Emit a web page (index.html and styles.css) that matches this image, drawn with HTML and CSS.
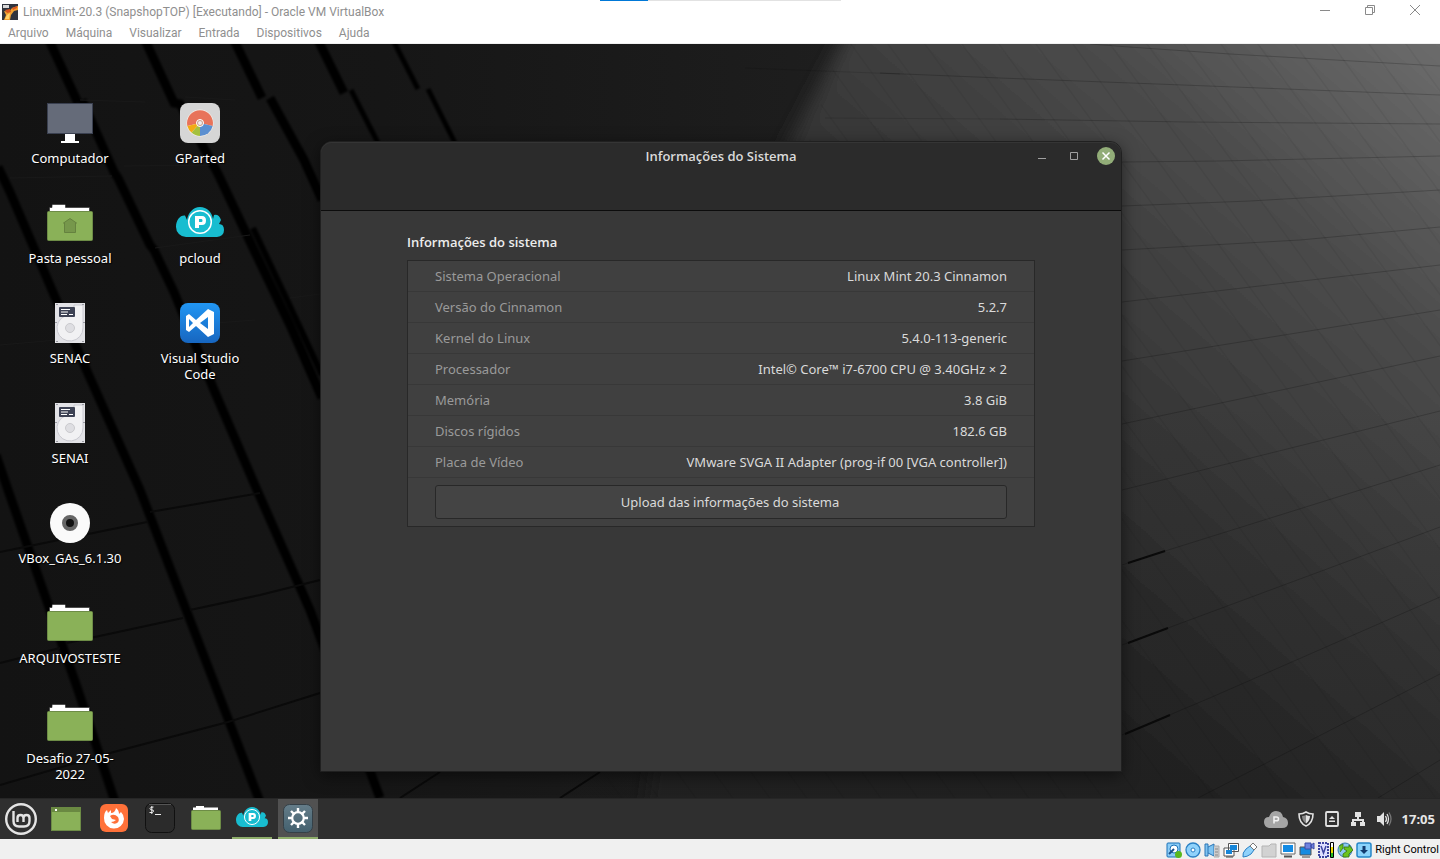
FILE: index.html
```html
<!DOCTYPE html>
<html lang="pt-BR">
<head>
<meta charset="utf-8">
<title>LinuxMint-20.3 (SnapshopTOP) [Executando] - Oracle VM VirtualBox</title>
<link rel="stylesheet" href="styles.css">
</head>
<body>
<svg class="defs" aria-hidden="true">
  <symbol id="folder" viewBox="0 3 48 48">
    <path d="M3.500 17V11.500H6V9.500Q6 8.500 7 8.500H18.500Q19.500 8.500 19.500 9.500V11.500H43.500V17Z" fill="#fff" stroke="#252525" stroke-opacity=".6"/>
    <rect x="1.500" y="15.500" width="45" height="29" rx="1" fill="#8ab158" stroke="#6d8c46"/>
  </symbol>
  <symbol id="drive" viewBox="0 0 48 48">
    <rect x="9" y="4" width="30" height="40" fill="#e2e2e6"/>
    <path d="M28 6H37V29A13 13 0 1 1 19 17L28 15Z" fill="#f1f1f3" stroke="#c9c9d0" stroke-width="1"/>
    <circle cx="24" cy="29" r="4.500" fill="#dedee2" stroke="#cacace"/>
    <rect x="13" y="8" width="16" height="10" rx="1" fill="#3d4254"/>
    <path d="M15 10.500h9M15 13h7M15 15.500h6m2 0h4" stroke="#fff" stroke-width="1"/>
    <path d="M10 5h2v1h-2zM36 5h2v1h-2zM10 42h2v1h-2zM36 42h2v1h-2zM9 23h2v1H9zM37 23h2v1h-2z" fill="#999aa2"/>
  </symbol>
  <symbol id="cloud" viewBox="0 0 48 32">
    <path d="M10 31A10 10 0 0 1 0 21C0 14 4 9 9 9.500L11 14C12 7 17 1 24 1S36 6 37 13L38 9Q43 8 45 14L43 18Q48 18 48 24T41 31Z" fill="#18bdd0"/>
    <circle cx="24" cy="16" r="11.300" fill="#18bdd0" stroke="#fff" stroke-width="1.500"/>
    <path d="M19 10H26Q30 10 30 14.500T26 19H23V22H19ZM23 13V16H25.500Q26.500 16 26.500 14.500T25.500 13Z" fill="#fff" fill-rule="evenodd"/>
  </symbol>
</svg>

<header class="host-title">
  <svg class="i16" viewBox="0 0 16 16"><rect width="16" height="16" fill="#30343e"/><path d="M1 1h6v3H1z" fill="#d8d8d8"/><path d="M2 7l5 1 3-4 6-2v4l-4 1-3 4-1 5H2l2-5Z" fill="#f0a030"/><path d="M3 6l5-1 1 3-4 1ZM10 4l5-2v2l-4 2Z" fill="#d9551f"/><path d="M5 11l3-2-1 6H3Z" fill="#ffd36b"/></svg>
  <h1>LinuxMint-20.3 (SnapshopTOP) [Executando] - Oracle VM VirtualBox</h1>
  <div class="host-tab"></div>
  <div class="host-controls">
    <button aria-label="Minimizar"><svg viewBox="0 0 12 12"><path d="M1 6.500h10"/></svg></button>
    <button aria-label="Restaurar"><svg viewBox="0 0 12 12"><path d="M1.500 3.500h7v7h-7zM3.500 3V1.500h7v7H9"/></svg></button>
    <button aria-label="Fechar"><svg viewBox="0 0 12 12"><path d="M1 1l10 10M11 1L1 11"/></svg></button>
  </div>
</header>
<nav class="host-menu">
  <button>Arquivo</button><button>Máquina</button><button>Visualizar</button><button>Entrada</button><button>Dispositivos</button><button>Ajuda</button>
</nav>

<main class="desktop">
  <svg class="wallpaper" viewBox="0 44 1440 754" preserveAspectRatio="xMidYMid slice" aria-hidden="true">
    <defs>
      <linearGradient id="base" x1="0" x2="850" y1="0" y2="0" gradientUnits="userSpaceOnUse"><stop offset="0" stop-color="#131313"/><stop offset=".45" stop-color="#161616"/><stop offset="1" stop-color="#1e1e1e"/></linearGradient>
      <linearGradient id="lit" x1="930" y1="620" x2="1440" y2="44" gradientUnits="userSpaceOnUse"><stop offset="0" stop-color="#202020"/><stop offset=".35" stop-color="#343434"/><stop offset=".7" stop-color="#4b4b4b"/><stop offset="1" stop-color="#6c6c6c"/></linearGradient>
      <linearGradient id="low" x1="0" y1="400" x2="0" y2="798" gradientUnits="userSpaceOnUse"><stop offset="0" stop-color="#1c1c1c" stop-opacity="0"/><stop offset="1" stop-color="#1c1c1c" stop-opacity=".3"/></linearGradient>
      <pattern id="slats" width="37" height="900" patternUnits="userSpaceOnUse" patternTransform="skewX(36)"><path d="M5 0V900" stroke="#000" stroke-opacity=".1"/></pattern>
      <clipPath id="right"><path d="M840 44H1440V798H600Z"/></clipPath>
      <filter id="soft" x="-10%" y="-10%" width="120%" height="120%"><feGaussianBlur stdDeviation="9"/></filter>
      <filter id="edge" x="-10%" y="-10%" width="120%" height="120%"><feGaussianBlur stdDeviation="1"/></filter>
    </defs>
    <rect y="44" width="1440" height="754" fill="url(#base)"/>
    <path d="M865 0H1500V850H640Q720 260 795 130Z" fill="url(#lit)" filter="url(#soft)"/>
    <rect x="560" y="400" width="880" height="398" fill="url(#low)"/>
    <rect x="600" y="44" width="840" height="754" fill="url(#slats)" clip-path="url(#right)"/>
    <g fill="none" stroke="#000" stroke-opacity=".2">
      <path d="M745 68L900 74M825 118L1000 119" stroke-opacity=".12"/>
      <path d="M1090 44L1129 47L1230 54L1440 66M880 73L1000 78L1157 84L1440 95M1000 119L1188 122L1440 124M1122 162L1220 161L1440 156M1122 206L1250 201L1440 190M1122 250L1300 240L1440 227M1122 302L1440 265M1122 361L1440 310M1122 424L1235 400L1440 356M1122 490L1440 411M1122 565L1165 551L1440 465M1122 645L1168 628L1440 527M1122 735L1212 697L1440 597M1198 798L1440 674M1378 798L1440 760"/>
    </g>
    <path d="M1128 563L1165 551M1128 643L1168 628M1125 734L1170 715" stroke="#0a0a0a" stroke-width="2"/>
    <g fill="none" stroke="#040404" stroke-width="9" filter="url(#edge)">
      <path d="M49 40L78 103M82 100L114 172L118 178L150 245L154 250L174 292L214 390L257 490L310 610L380 798"/>
      <path d="M145 40L174 103L180 104L216 170L219 176L254 250L290 325L322 398M234 40L262 98M270 98L304 160L322 200M318 40L344 93"/>
      <path d="M-2 167L10 192L52 290L82 360L140 490L217 690L260 802M-4 455L8 490L78 690L115 802"/>
      <path d="M253 228L288 302L322 375" stroke-width="6"/>
      <path d="M393 40L418 89M351 90L379 145M428 89L456 145" stroke-width="5"/>
    </g>
    <path d="M0 552L147 522M150 512L260 493M67 643L183 618M0 663L60 648M0 785L110 753L228 722L320 693M190 610L260 595L320 580M400 798L440 772M560 798L600 772" fill="none" stroke="#0a0a0a" stroke-width="2"/>
    <path d="M80 100L145 102M185 97L235 100M10 178L112 176M124 166L210 165M155 248L250 235M0 345L80 338M190 325L255 320M290 298L320 294" fill="none" stroke="#191919"/>
  </svg>

  <div class="icons">
    <button class="icon"><svg viewBox="0 0 48 48"><rect x="1.500" y="4.500" width="45" height="30" fill="#656b79" stroke="#3a4050"/><path d="M19 35H29V42H33V44H15V42H19Z" fill="#fff"/></svg><span>Computador</span></button>
    <button class="icon"><svg viewBox="0 0 48 48"><use href="#folder"/><path d="M17.500 24L24 19.500L30.500 24H29.500V33.500H18.500V24Z" fill="#76974b" stroke="#65823f"/></svg><span>Pasta pessoal</span></button>
    <button class="icon"><svg><use href="#drive"/></svg><span>SENAC</span></button>
    <button class="icon"><svg><use href="#drive"/></svg><span>SENAI</span></button>
    <button class="icon"><svg viewBox="0 0 48 48"><circle cx="24" cy="24" r="20" fill="#fafafa"/><circle cx="24" cy="24" r="6" fill="#111" stroke="#666" stroke-width="4"/></svg><span>VBox_GAs_6.1.30</span></button>
    <button class="icon"><svg><use href="#folder"/></svg><span>ARQUIVOSTESTE</span></button>
    <button class="icon"><svg><use href="#folder"/></svg><span>Desafio 27-05-2022</span></button>
    <button class="icon"><svg viewBox="0 0 48 48"><rect x="4" y="4" width="40" height="40" rx="8" fill="#d6d6d6"/><circle cx="24" cy="24" r="13.500" fill="#f6efe9"/><path d="M24 24L11.300 27A13 13 0 1 1 36.700 27Z" fill="#e8735a"/><path d="M24 24L36.700 27A13 13 0 0 1 24 37Z" fill="#5b8fd0"/><path d="M24 24V37A13 13 0 0 1 15.500 33.500Z" fill="#a5c03d"/><path d="M24 24L15.500 33.500A13 13 0 0 1 11.300 27Z" fill="#f2ab14"/><circle cx="24" cy="24" r="3.500" fill="#ddd" stroke="#fff" stroke-width="1"/><circle cx="24" cy="24" r="2.500" fill="#eee" stroke="#c98" stroke-width="1"/></svg><span>GParted</span></button>
    <button class="icon"><svg viewBox="0 -7 48 48"><use href="#cloud" width="48" height="32"/></svg><span>pcloud</span></button>
    <button class="icon"><svg viewBox="0 0 48 48"><defs><linearGradient id="vs" x2="0" y2="1"><stop stop-color="#2196f3"/><stop offset="1" stop-color="#1766c0"/></linearGradient></defs><rect x="4" y="4" width="40" height="40" rx="8" fill="url(#vs)"/><path d="M10 17L13 15L20 21L32 10L38 13V35L32 38L20 27L13 33L10 31ZM13 20V28L17 24ZM32 18L24 24L32 30Z" fill="#fff" fill-rule="evenodd"/></svg><span>Visual Studio Code</span></button>
  </div>

  <section class="window">
    <header class="window-head">
      <h2>Informações do Sistema</h2>
      <div class="window-controls">
        <button aria-label="Minimizar"><svg viewBox="0 0 18 18"><path d="M5 11.500h8"/></svg></button>
        <button aria-label="Maximizar"><svg viewBox="0 0 18 18"><path d="M5.500 5.500h7v7h-7z"/></svg></button>
        <button class="close" aria-label="Fechar"><svg viewBox="0 0 18 18"><path d="M5.500 5.500l7 7m0-7l-7 7"/></svg></button>
      </div>
    </header>
    <div class="window-body">
      <h3>Informações do sistema</h3>
      <div class="card">
        <table>
          <tr><th scope="row">Sistema Operacional</th><td>Linux Mint 20.3 Cinnamon</td></tr>
          <tr><th scope="row">Versão do Cinnamon</th><td>5.2.7</td></tr>
          <tr><th scope="row">Kernel do Linux</th><td>5.4.0-113-generic</td></tr>
          <tr><th scope="row">Processador</th><td>Intel© Core™ i7-6700 CPU @ 3.40GHz × 2</td></tr>
          <tr><th scope="row">Memória</th><td>3.8 GiB</td></tr>
          <tr><th scope="row">Discos rígidos</th><td>182.6 GB</td></tr>
          <tr><th scope="row">Placa de Vídeo</th><td>VMware SVGA II Adapter (prog-if 00 [VGA controller])</td></tr>
        </table>
        <button class="upload">Upload das informações do sistema</button>
      </div>
    </div>
  </section>
</main>

<footer class="panel">
  <div class="launchers">
    <button aria-label="Menu"><svg viewBox="0 0 40 40"><circle cx="20" cy="20" r="14.800" fill="none" stroke="#e4e4e4" stroke-width="2.400"/><path d="M12.500 12V22Q12.500 27.500 18 27.500H23Q28.500 27.500 28.500 22V19Q28.500 16 25.500 16T22.500 19V23M22.500 19Q22.500 16 19.500 16T16.500 19V23" fill="none" stroke="#e4e4e4" stroke-width="2.400"/></svg></button>
    <button class="show-desktop" aria-label="Mostrar área de trabalho"><svg viewBox="0 0 40 40"><rect x="5.500" y="8.500" width="29" height="23" fill="#8ab158" stroke="#6d8c46"/><path d="M5 8H35V13H5Z" fill="#6a8942"/><path d="M9 10h2v2H9z" fill="#fff"/></svg></button>
    <button aria-label="Firefox"><svg viewBox="0 0 40 40"><rect x="6" y="5" width="28" height="28" rx="6" fill="#ff7139"/><path d="M10 19Q10 13 13 11L14 14L17 11V14Q21 14 22 9Q25 11 25 15L27 13Q30 16 30 20A10 10 0 0 1 10 19Z" fill="#fff"/><path d="M16 17Q20 14 24 18Q26 22 23 24T17 23Q20 23 22 21L18 20Z" fill="#ff7139"/></svg></button>
    <button aria-label="Terminal"><svg viewBox="0 0 40 40"><rect x="5.500" y="4.500" width="29" height="29" rx="6" fill="#2b2b2b" stroke="#101010"/><path d="M9 5.500H31" stroke="#555"/><path d="M13.500 8Q10 8 10 9.500T12 11T13.500 12.500T9.500 13.500M11.800 7V15M15 15.500h6" fill="none" stroke="#eee"/></svg></button>
    <button aria-label="Arquivos"><svg viewBox="0 0 40 40"><path d="M7 12V8.500H10V7H18V8.500H32V12Z" fill="#fff"/><rect x="5.500" y="11.500" width="29" height="19" rx="1" fill="#8ab158" stroke="#6d8c46"/></svg></button>
    <button class="running" aria-label="pcloud"><svg viewBox="0 0 40 40"><use href="#cloud" x="4" y="7" width="32" height="22"/></svg></button>
    <button class="running active" aria-label="Configurações"><svg viewBox="0 0 40 40"><defs><linearGradient id="gear" x2="0" y2="1"><stop stop-color="#657d89"/><stop offset="1" stop-color="#43606e"/></linearGradient></defs><rect x="5.500" y="5.500" width="29" height="28" rx="6" fill="url(#gear)" stroke="#354047"/><circle cx="20" cy="19" r="5.800" fill="none" stroke="#fff" stroke-width="2.200"/><path d="M20 9v5M20 24v5M10 19h5M25 19h5M13 12l3.500 3.500M23.500 22.500L27 26M27 12l-3.500 3.500M16.500 22.500L13 26" stroke="#fff" stroke-width="2.400"/></svg></button>
  </div>
  <div class="tray">
    <button aria-label="pcloud"><svg class="i24" viewBox="0 0 24 18"><path d="M5 18Q0 17 0 12T5 7Q7 1 12 1Q18 1 19 7Q24 8 24 13T18 18Z" fill="#a5a5a5"/><path d="M10 13.500V7H12.500Q14.500 7 14.500 8.900T12.500 10.800H10" fill="none" stroke="#f2f2f2" stroke-width="1.500"/></svg></button>
    <button aria-label="Atualizações"><svg class="i16" viewBox="0 0 16 16"><path d="M8 1Q11 3 15 3Q15 12 8 15Q1 12 1 3Q5 3 8 1Z" fill="none" stroke="#e2e2e2" stroke-width="1.600"/><path d="M8 4Q10 5 12 5Q12 10 8 12.500Z" fill="#e2e2e2"/><path d="M8 4Q6 5 4 5Q4 10 8 12.500Z" fill="#888"/></svg></button>
    <button aria-label="Discos"><svg class="i16" viewBox="0 0 16 16"><rect x="2" y="1" width="12" height="14" rx="1" fill="none" stroke="#e2e2e2" stroke-width="1.800"/><path d="M5 8L8 5l3 3ZM5 9.500h6V11H5z" fill="#e2e2e2"/></svg></button>
    <button aria-label="Rede"><svg class="i16" viewBox="0 0 16 16"><path d="M5 1h6v5H9v2h5v3h1v4h-5v-4h2v-1H4v1h2v4H1v-4h1V8h5V6H5z" fill="#e2e2e2"/></svg></button>
    <button aria-label="Som"><svg class="i16" viewBox="0 0 16 16"><path d="M1 5h3l4-4v14l-4-4H1z" fill="#e2e2e2"/><path d="M9.500 5Q11.500 8 9.500 11M11 3Q14 8 11 13" fill="none" stroke="#e2e2e2" stroke-width="1.300"/><path d="M13 1.500Q17 8 13 14.500" fill="none" stroke="#777" stroke-width="1.300"/></svg></button>
    <time>17:05</time>
  </div>
</footer>

<footer class="host-status">
  <svg class="i16" viewBox="0 0 16 16"><rect x="1" y="1" width="13" height="14" rx="1" fill="#8ccdf7" stroke="#1a72b8"/><circle cx="8" cy="7" r="4" fill="#fff" stroke="#1a72b8"/><path d="M8 7L3 12" stroke="#1a4f88" stroke-width="2"/><circle cx="12.500" cy="12.500" r="3.500" fill="#58b81e"/></svg>
  <svg class="i16" viewBox="0 0 16 16"><circle cx="8" cy="8" r="7" fill="#8fd2fb" stroke="#2a80c4" stroke-width="1.300"/><circle cx="8" cy="8" r="2" fill="#fff" stroke="#2a80c4"/></svg>
  <svg class="i16" viewBox="0 0 16 16"><path d="M1 2h3v12H1zM4 5l6-3v12l-6-3" fill="#7fc4f2" stroke="#2a74b4"/><path d="M10 4h5v11h-5" fill="#ccc" stroke="#aaa"/><path d="M11 7h3m-3 3h3m-3 3h3" stroke="#888"/></svg>
  <svg class="i16" viewBox="0 0 16 16"><path d="M5.500 1.500h10v8h-10zM1 6h10v8H1z" fill="#fff" stroke="#555"/><path d="M7 3h7v5H7zM3 8h6v4H3z" fill="#1585d8"/><path d="M3 15h7" stroke="#444"/></svg>
  <svg class="i16" viewBox="0 0 16 16"><path d="M1 15Q0 11 4 7L8 4l4 4-3 4Q5 15 1 15Z" fill="#8fd2fb" stroke="#2a80c4"/><path d="M8 4l3-3 4 4-3 3Z" fill="#fff" stroke="#777"/></svg>
  <svg class="i16" viewBox="0 0 16 16"><path d="M1 4h7l2-2h5v13H1z" fill="#d2d2d2" stroke="#b4b4b4"/></svg>
  <svg class="i16" viewBox="0 0 16 16"><path d="M1 1h14v11H1z" fill="#fff" stroke="#666"/><path d="M3 3h10v7H3z" fill="#138be4"/><path d="M4 14.500h8" stroke="#555" stroke-width="2"/></svg>
  <svg class="i16" viewBox="0 0 16 16"><path d="M1 5h11v8H1z" fill="#168be0" stroke="#555"/><path d="M3 15h8" stroke="#444"/><path d="M6 1h6v6H6zM12 3l3-2v6l-3-2z" fill="#6f83df" stroke="#3c4aa4"/></svg>
  <svg class="i16" viewBox="0 0 16 16"><rect x="1" y="1" width="9" height="14" fill="#dde0ff" stroke="#3c45a0" stroke-width="2" stroke-dasharray="2 1"/><path d="M3 4l2.500 7L8 4" fill="none" stroke="#3c45a0" stroke-width="1.500"/><path d="M12.500.500h3v15h-3z" fill="#fff" stroke="#000"/><path d="M13 5h2v10h-2z" fill="#f0e000"/><path d="M13 11h2v4h-2z" fill="#24b824"/></svg>
  <svg class="i16" viewBox="0 0 16 16"><circle cx="8" cy="8" r="7" fill="#8ac7f0" stroke="#3578ac"/><path d="M2 4l4-2v4L3 10M7 5h5v-2l4 5-4 4v3H6v-3l4-3-3-2Z" fill="#6bc31f" stroke="#34720f" stroke-width=".8"/></svg>
  <svg class="i16" viewBox="0 0 16 16"><rect x="1" y="1" width="14" height="14" rx="2" fill="#8bd3fb" stroke="#2687c8" stroke-width="1.500"/><path d="M6.500 4h3v4H12l-4 4-4-4h2.500Z" fill="#123c70"/></svg>
  <span>Right Control</span>
</footer>
</body>
</html>
```

FILE: styles.css
```css
* { box-sizing: border-box; }
body {
  margin: 0;
  min-height: 100vh;
  display: flex;
  flex-direction: column;
  background: #fff;
  font: 13px/16px "Noto Sans", "Open Sans", sans-serif;
}
h1, h2, h3 { margin: 0; font-size: inherit; }
h2, h3 { font-family: "Open Sans", sans-serif; font-weight: 600; }
button {
  margin: 0;
  padding: 0;
  border: 0;
  background: none;
  color: inherit;
  font: inherit;
}
svg { display: block; flex: none; }
.defs { position: absolute; width: 0; height: 0; }
.i16 { width: 16px; height: 16px; }
.i24 { width: 24px; height: 18px; }

.host-title {
  position: relative;
  display: flex;
  align-items: center;
  gap: 5px;
  height: 23px;
  padding-left: 2px;
  color: #8f8f8f;
  font: 12px/16px Roboto, sans-serif;
}
.host-title h1 { font-weight: 400; }
.host-tab {
  position: absolute;
  top: 0;
  left: 50%;
  width: 241px;
  height: 1px;
  margin-left: -120px;
  background: linear-gradient(to right, #0078d7 48px, #e2e2e2 48px);
}
.host-controls {
  display: flex;
  align-self: flex-start;
  margin-left: auto;
  padding-right: 3px;
}
.host-controls button {
  display: grid;
  place-items: center;
  width: 45px;
  height: 20px;
}
.host-controls svg {
  width: 12px;
  height: 12px;
  fill: none;
  stroke: #8a8a8a;
}
.host-menu {
  display: flex;
  gap: 17px;
  height: 21px;
  padding-left: 8px;
  border-bottom: 1px solid #f0f0f0;
  color: #8f8f8f;
  font: 12px/20px Roboto, sans-serif;
}

.desktop {
  position: relative;
  flex: 1;
  overflow: hidden;
  background: #151515;
}
.wallpaper {
  position: absolute;
  inset: 0;
  width: 100%;
  height: 100%;
}
.icons {
  position: relative;
  display: grid;
  grid-template-rows: repeat(6, 100px) auto;
  grid-auto-columns: 130px;
  grid-auto-flow: column;
  width: max-content;
  padding: 55px 0 0 5px;
}
.icon {
  display: flex;
  flex-direction: column;
  align-items: center;
  gap: 3px;
  padding: 0 15px;
  color: #fff;
  text-shadow: 1px 1px 1px #000;
}
.icon svg { width: 48px; height: 48px; }

.window {
  position: absolute;
  top: 97px;
  left: 320px;
  display: flex;
  flex-direction: column;
  width: 802px;
  min-height: 631px;
  border: 1px solid #202020;
  border-radius: 12px 12px 0 0;
  background: #383838;
  color: #dadada;
  box-shadow: 0 4px 16px rgba(0, 0, 0, .5);
}
.window-head {
  display: grid;
  grid-template-columns: 1fr auto 1fr;
  align-items: start;
  height: 69px;
  padding: 5px 6px;
  border-bottom: 1px solid #0c0c0c;
  border-radius: 11px 11px 0 0;
  background: #2b2b2b;
  box-shadow: inset 0 1px #353535;
}
.window-head h2 { grid-column: 2; line-height: 19px; }
.window-controls {
  display: flex;
  justify-content: flex-end;
  gap: 14px;
}
.window-controls button { width: 18px; height: 18px; border-radius: 50%; }
.window-controls svg {
  width: 18px;
  height: 18px;
  fill: none;
  stroke: #a0a0a0;
}
.window-controls .close { background: #92ad78; }
.window-controls .close svg { stroke: #fff; stroke-width: 1.5; }
.window-body { padding: 21px 86px; }
.window-body h3 {
  margin-bottom: 8px;
  color: #ececec;
  line-height: 20px;
}
.card {
  padding-bottom: 7px;
  border: 1px solid #282828;
  background: #404040;
}
table { width: 100%; border-spacing: 0; }
th, td {
  height: 31px;
  padding: 0 27px;
  border-bottom: 1px solid #383838;
  font-weight: 400;
  text-align: left;
}
th { color: #9a9a9a; }
td { text-align: right; }
.upload {
  display: block;
  width: calc(100% - 54px);
  height: 34px;
  margin: 7px 27px 0;
  padding-left: 18px;
  border: 1px solid #282828;
  border-radius: 3px;
  background: #444;
}

.panel {
  display: flex;
  justify-content: space-between;
  height: 41px;
  border-top: 1px solid #262626;
  background: #2f2f2f;
  color: #e6e6e6;
}
.launchers { display: flex; gap: 6px; padding-left: 1px; }
.launchers button { width: 40px; height: 40px; }
.launchers svg { width: 40px; height: 40px; }
.launchers .show-desktop { margin: 0 2px 0 -1px; }
.launchers .running { box-shadow: inset 0 -2px #8fae6b; }
.launchers .active { background: #515151; }
.tray {
  display: flex;
  align-items: center;
  gap: 10px;
  padding-right: 5px;
}
.tray time { font-weight: 700; }

.host-status {
  display: flex;
  align-items: center;
  justify-content: flex-end;
  gap: 3px;
  height: 20px;
  padding: 1px 1px 0 0;
  background: #f0f0f0;
  color: #000;
  font: 11px/16px Roboto, sans-serif;
}
```
